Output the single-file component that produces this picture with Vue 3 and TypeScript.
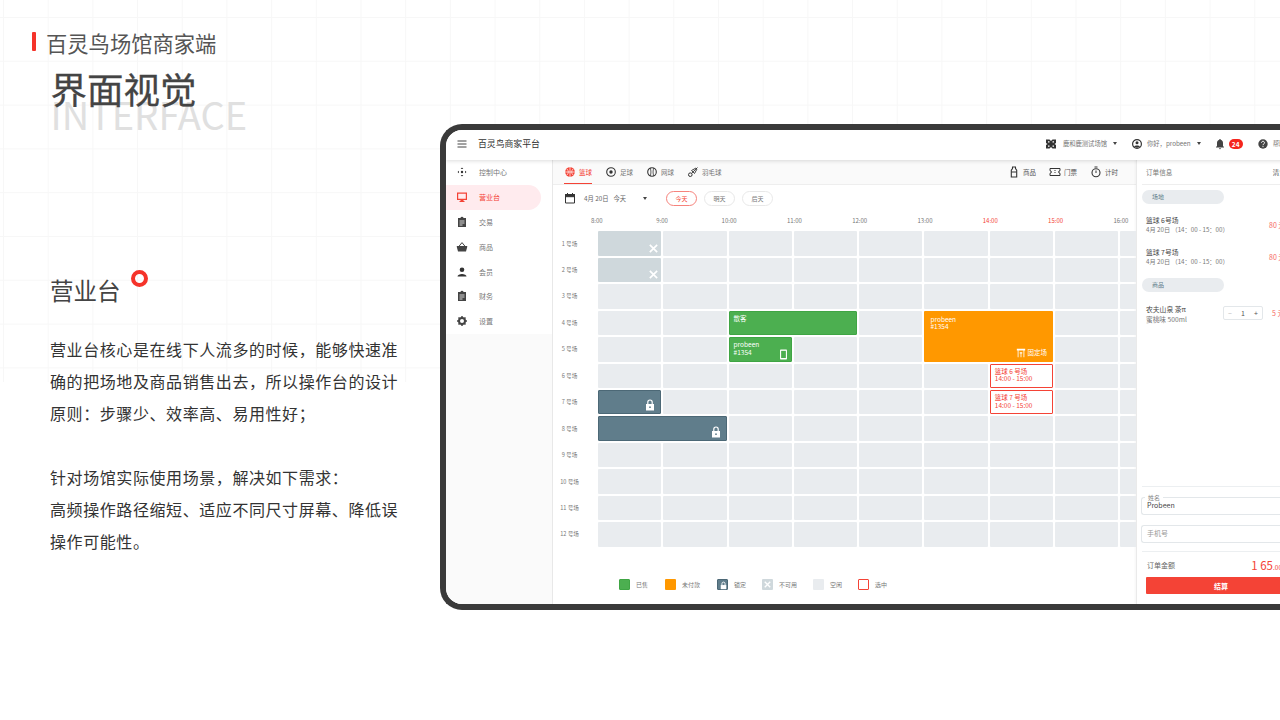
<script setup lang="ts">
type Cell = { col: number; row: number; span?: number; rows?: number; kind: string; l1?: string; l2?: string; icon?: string; tag?: string }

const nav = [
  { label: '控制中心', icon: 'move' },
  { label: '营业台', icon: 'monitor', active: true },
  { label: '交易', icon: 'clip' },
  { label: '商品', icon: 'basket' },
  { label: '会员', icon: 'person' },
  { label: '财务', icon: 'clip' },
  { label: '设置', icon: 'gear' },
]
const hours = ['8:00', '9:00', '10:00', '11:00', '12:00', '13:00', '14:00', '15:00', '16:00']
const courts = Array.from({ length: 12 }, (_, i) => `${i + 1} 号场`)
const taken: Cell[] = [
  { col: 1, row: 1, kind: 'off', icon: 'x' },
  { col: 1, row: 2, kind: 'off', icon: 'x' },
  { col: 3, row: 4, span: 2, kind: 'sold', l1: '散客' },
  { col: 3, row: 5, kind: 'sold', l1: 'probeen', l2: '#1354', icon: 'phone' },
  { col: 6, row: 4, span: 2, rows: 2, kind: 'unpaid', l1: 'probeen', l2: '#1354', tag: '固定场' },
  { col: 7, row: 6, kind: 'sel', l1: '篮球 6 号场', l2: '14:00 - 15:00' },
  { col: 7, row: 7, kind: 'sel', l1: '篮球 7 号场', l2: '14:00 - 15:00' },
  { col: 1, row: 7, kind: 'lock', icon: 'lock' },
  { col: 1, row: 8, span: 2, kind: 'lock', icon: 'lock' },
]
const covered = (c: number, r: number) =>
  taken.some(t => c >= t.col && c < t.col + (t.span ?? 1) && r >= t.row && r < t.row + (t.rows ?? 1))
const free: { col: number; row: number }[] = []
for (let r = 1; r <= 12; r++) for (let c = 1; c <= 9; c++) if (!covered(c, r)) free.push({ col: c, row: r })
const place = (t: { col: number; row: number; span?: number; rows?: number }) => ({
  gridColumn: `${t.col} / span ${t.span ?? 1}`,
  gridRow: `${t.row} / span ${t.rows ?? 1}`,
})
const legend = [
  { k: 'sold', t: '已售' },
  { k: 'unpaid', t: '未付款' },
  { k: 'lock', t: '锁定' },
  { k: 'off', t: '不可用' },
  { k: 'idle', t: '空闲' },
  { k: 'sel', t: '选中' },
]
</script>

<template>
  <div class="page">
    <section class="intro">
      <div class="brand"><i class="brand-bar"></i><span>百灵鸟场馆商家端</span></div>
      <div class="heading">
        <span class="en">INTERFACE</span>
        <h1>界面视觉</h1>
      </div>
      <div class="copy">
        <h2>营业台<i class="ring"></i></h2>
        <p>营业台核心是在线下人流多的时候，能够快速准<br />确的把场地及商品销售出去，所以操作台的设计<br />原则：步骤少、效率高、易用性好；</p>
        <p class="p2">针对场馆实际使用场景，解决如下需求：<br />高频操作路径缩短、适应不同尺寸屏幕、降低误<br />操作可能性。</p>
      </div>
    </section>

    <section class="device">
      <div class="screen">
        <header class="top">
          <svg class="ic12 burger" viewBox="0 0 12 12"><path d="M1.500 3h9M1.500 6h9M1.500 9h9" stroke="#444" stroke-width="1" fill="none" /></svg>
          <b class="app">百灵鸟商家平台</b>
          <div class="top-r">
            <span class="ti ven">
              <svg class="ic12" viewBox="0 0 12 12"><path d="M1 1.500h3.500L6 3l1.500-1.500H11V5L9.500 6 11 7v3.500H7.500L6 9l-1.500 1.500H1V7l1.500-1L1 5z" fill="#333" /><path d="M3 3.300h1.500v1.200H3zM7.500 3.300H9v1.200H7.500zM3 7.500h1.500v1.200H3zM7.500 7.500H9v1.200H7.500z" fill="#fff" /></svg>
              <em class="ven-t">鹿和鹿测试场馆</em><i class="caret"></i>
            </span>
            <span class="ti usr">
              <svg class="ic12" viewBox="0 0 12 12"><circle cx="6" cy="6" r="4.400" fill="none" stroke="#333" stroke-width="1.200" /><circle cx="6" cy="4.800" r="1.500" fill="#333" /><path d="M3 8.600c1-1.400 5-1.400 6 0-1.600 1.400-4.400 1.400-6 0z" fill="#333" /></svg>
              <em class="usr-t">你好，probeen</em><i class="caret"></i>
            </span>
            <span class="ti bell">
              <svg class="ic12" viewBox="0 0 12 12"><path d="M6 1c-.5 0-.8.300-.8.800C3.800 2.200 3 3.400 3 5v3L2 9v.5h8V9L9 8V5c0-1.600-.8-2.800-2.200-3.200C6.800 1.300 6.500 1 6 1zM5 10.200a1 1 0 0 0 2 0z" fill="#444" /></svg>
              <em class="badge">24</em>
            </span>
            <span class="ti help">
              <svg class="ic12" viewBox="0 0 12 12"><circle cx="6" cy="6" r="4.700" fill="#444" /><path d="M4.500 4.800c0-2 3-2 3 0 0 1.200-1.500 1-1.500 2.400" stroke="#fff" stroke-width="1" fill="none" /><circle cx="6" cy="8.600" r=".6" fill="#fff" /></svg>
              <em>帮助</em>
            </span>
          </div>
        </header>

        <div class="body">
          <aside class="side">
            <ul>
              <li v-for="n in nav" :key="n.label" :class="{ on: n.active }">
                <svg class="ic12" viewBox="0 0 12 12">
                  <template v-if="n.icon === 'move'"><path d="M6 1.500 7.300 3H4.700zM6 10.500 4.700 9h2.600zM1.500 6 3 4.700v2.600zM10.500 6 9 7.300V4.700z" fill="#333" /><circle cx="6" cy="6" r="1.200" fill="#333" /></template>
                  <template v-else-if="n.icon === 'monitor'"><path d="M1 1.500h10v7.500H7.500v1h1v1h-5v-1h1V9H1z" fill="#f44336" /><path d="M2.200 2.700h7.600v5.100H2.200z" fill="#ffebee" /></template>
                  <template v-else-if="n.icon === 'clip'"><path d="M2 2h2.400a1.700 1.700 0 0 1 3.200 0H10v9H2z" fill="#444" /><path d="M3.500 5h5M3.500 7h5M3.500 9h3" stroke="#fff" stroke-width=".8" /></template>
                  <template v-else-if="n.icon === 'basket'"><path d="M.8 5h10.400v1L10 10.500H2L.8 6z" fill="#444" /><path d="M3.200 5 6 1.600 8.800 5" stroke="#444" fill="none" /></template>
                  <template v-else-if="n.icon === 'person'"><circle cx="6" cy="3.700" r="2.300" fill="#333" /><path d="M1.500 10.500c0-3.400 9-3.400 9 0z" fill="#333" /></template>
                  <template v-else><circle cx="6" cy="6" r="3" fill="none" stroke="#444" stroke-width="2" /><path d="M6 1v2M6 9v2M1 6h2M9 6h2M2.500 2.500l1.500 1.500M8 8l1.500 1.500M2.500 9.500 4 8M8 4l1.500-1.500" stroke="#444" stroke-width="1.500" /></template>
                </svg>
                <span>{{ n.label }}</span>
              </li>
            </ul>
          </aside>

          <main class="main">
            <nav class="tabs">
              <span class="tab on">
                <svg class="ic12" viewBox="0 0 12 12"><circle cx="6" cy="6" r="4.800" fill="#f44336" /><path d="M1.200 6h9.600M6 1.200v9.600M2.800 2.800c2 2 2 4.400 0 6.400M9.200 2.800c-2 2-2 4.400 0 6.400" stroke="#fff" stroke-width=".7" fill="none" /></svg>
                篮球
              </span>
              <span class="tab">
                <svg class="ic12" viewBox="0 0 12 12"><circle cx="6" cy="6" r="4.300" fill="none" stroke="#333" stroke-width="1.100" /><circle cx="6" cy="6" r="1.700" fill="#333" /></svg>
                足球
              </span>
              <span class="tab">
                <svg class="ic12" viewBox="0 0 12 12"><circle cx="6" cy="6" r="4.300" fill="none" stroke="#333" stroke-width="1.100" /><path d="M4.200 2c1 2.400 1 5.600 0 8M7.800 2c-1 2.400-1 5.600 0 8" stroke="#333" stroke-width=".8" fill="none" /></svg>
                网球
              </span>
              <span class="tab">
                <svg class="ic12" viewBox="0 0 12 12"><circle cx="3.300" cy="8.700" r="1.800" fill="none" stroke="#333" /><path d="M4.600 7.300 10.500 1.500M4.500 4.500 9 2l1 1-2.500 4.500z" stroke="#333" stroke-width=".9" fill="none" /></svg>
                羽毛球
              </span>
              <span class="tab-r">
                <span class="tr">
                  <svg class="ic12" viewBox="0 0 12 12"><path d="M4.500 1h3v1.600l1.200 1.600v6.800H3.300V4.200l1.200-1.600z" fill="none" stroke="#333" stroke-width="1.100" /><path d="M3.500 6h5" stroke="#333" /></svg>
                  商品
                </span>
                <span class="tr">
                  <svg class="ic12" viewBox="0 0 12 12"><path d="M1 2.500h10v2.200a1.300 1.300 0 0 0 0 2.600v2.200H1V7.300a1.300 1.300 0 0 0 0-2.600z" fill="none" stroke="#333" stroke-width="1" /><path d="M6 4v4" stroke="#333" stroke-dasharray="1 1" /></svg>
                  门票
                </span>
                <span class="tr">
                  <svg class="ic12" viewBox="0 0 12 12"><circle cx="6" cy="6.800" r="4" fill="none" stroke="#333" stroke-width="1.100" /><path d="M4.500 1h3M6 4.500v2.500" stroke="#333" stroke-width="1" /></svg>
                  计时
                </span>
              </span>
            </nav>

            <div class="dates">
              <svg class="ic12" viewBox="0 0 12 12"><path d="M1.500 2.500h9v8.500h-9z" fill="none" stroke="#333" stroke-width="1" /><path d="M1.500 2.500h9v2.200h-9zM3.500 1v2M8.500 1v2" fill="#333" stroke="#333" /></svg>
              <span class="d-txt">4月 20日</span><span class="d-txt d2">今天</span><i class="caret c2"></i>
              <span class="pill on">今天</span><span class="pill">明天</span><span class="pill">后天</span>
            </div>

            <div class="hours">
              <span v-for="(h, i) in hours" :key="h" :class="{ hot: i === 6 || i === 7 }">{{ h }}</span>
            </div>

            <div class="sheet">
              <div class="courts"><span v-for="c in courts" :key="c">{{ c }}</span></div>
              <div class="grid">
                <i v-for="f in free" :key="`${f.col}-${f.row}`" class="cell" :style="place(f)"></i>
                <div v-for="t in taken" :key="`t${t.col}-${t.row}`" class="cell" :class="t.kind" :style="place(t)">
                  <span v-if="t.l1" class="l1">{{ t.l1 }}</span>
                  <span v-if="t.l2" class="l2">{{ t.l2 }}</span>
                  <svg v-if="t.icon === 'x'" class="mark" viewBox="0 0 12 12"><path d="M2 2l8 8M10 2l-8 8" stroke="#fff" stroke-width="1.800" /></svg>
                  <svg v-if="t.icon === 'lock'" class="mark" viewBox="0 0 12 12"><path d="M2 5h8v6.500H2z" fill="#fff" /><path d="M3.800 5V3.200a2.200 2.200 0 0 1 4.400 0V5" fill="none" stroke="#fff" stroke-width="1.200" /><circle cx="6" cy="8.200" r=".9" fill="#607d8b" /></svg>
                  <svg v-if="t.icon === 'phone'" class="mark" viewBox="0 0 12 12"><path d="M3 .5h6a.8.800 0 0 1 .8.800v9.400a.8.800 0 0 1-.8.800H3a.8.800 0 0 1-.8-.8V1.300A.8.800 0 0 1 3 .5z" fill="#fff" /><path d="M3.400 2h5.200v7.800H3.400z" fill="#4caf50" /></svg>
                  <span v-if="t.tag" class="tag">
                    <svg class="ic10" viewBox="0 0 12 12"><path d="M1 1h10v2H1zM2 3h1v8H2zM9 3h1v8H9zM4.500 5h3v1.500h-3zM5.500 6.500h1V11h-1z" fill="#fff" /></svg>{{ t.tag }}
                  </span>
                </div>
              </div>
            </div>

            <footer class="legend">
              <span v-for="l in legend" :key="l.k" class="lg" :class="`lg-${l.k}`">
                <i class="sw" :class="l.k">
                  <svg v-if="l.k === 'lock'" viewBox="0 0 12 12"><path d="M3 5.500h6V10H3z" fill="#fff" /><path d="M4.300 5.500V4a1.700 1.700 0 0 1 3.400 0v1.500" fill="none" stroke="#fff" /></svg>
                  <svg v-if="l.k === 'off'" viewBox="0 0 12 12"><path d="M3 3l6 6M9 3 3 9" stroke="#fff" stroke-width="1.500" /></svg>
                </i>
                {{ l.t }}
              </span>
            </footer>
          </main>

          <aside class="order">
            <div class="o-head"><span>订单信息</span><span class="clear">清空</span></div>
            <div class="o-tag">场地</div>
            <div class="o-row r1">
              <div><b>篮球 6号场</b><small>4月 20日 （14：00 - 15：00）</small></div><em>80 元</em>
            </div>
            <div class="o-row r2">
              <div><b>篮球 7号场</b><small>4月 20日 （14：00 - 15：00）</small></div><em>80 元</em>
            </div>
            <div class="o-tag t2">商品</div>
            <div class="o-row r3">
              <div><b>农夫山泉 茶π</b><small>蜜桃味 500ml</small></div>
              <span class="stepper"><i class="minus">−</i><i>1</i><i>+</i></span>
              <em>5 元</em>
            </div>
            <div class="spacer"></div>
            <div class="field name"><label>姓名</label>Probeen</div>
            <div class="field phone">手机号</div>
            <div class="sum"><span>订单金额</span><strong>1 65<small>.00 元</small></strong></div>
            <button class="pay">结算</button>
          </aside>
        </div>
      </div>
    </section>
  </div>
</template>

<style>
html, body { margin: 0; background: #fff; }
</style>

<style scoped>
* { box-sizing: border-box; }
i, em { font-style: normal; }
.page {
  position: relative; width: 1280px; height: 720px; overflow: hidden; display: flex;
  font-family: "Noto Sans CJK SC", "Noto Sans", sans-serif; color: #333;
  background-color: #fff;
}
.page::before {
  content: ""; position: absolute; left: 0; top: 0; width: 1280px; height: 382px;
  background-image: linear-gradient(#f7f7f7 1px, transparent 1px), linear-gradient(90deg, #f7f7f7 1px, transparent 1px);
  background-size: 44.700px 43.800px; background-position: 3px 17px;
}
.intro { position: relative; width: 440px; flex: none; padding: 28px 0 0 32px; }
.brand { display: flex; align-items: center; gap: 10px; height: 28px; font-size: 21.300px; color: #555; }
.brand-bar { width: 4px; height: 19px; background: #f5332a; border-radius: 1px; margin-top: -2px; }
.heading { position: relative; margin: 3px 0 0 18.500px; height: 65px; }
.heading h1 { position: relative; margin: 0; font-size: 36.500px; font-weight: 400; line-height: 60px; color: #444; -webkit-text-stroke: .3px #444; }
.en { position: absolute; left: 0; top: 31px; font-size: 38px; line-height: 48px; font-weight: 400; color: #e0e0e0; white-space: nowrap; }
.copy { margin: 0 0 0 18px; padding-top: 149px; width: 380px; }
.copy h2 { position: relative; margin: 0; font-size: 23.500px; font-weight: 400; line-height: 34px; color: #444; }
.ring { position: absolute; left: 81px; top: -3px; width: 17px; height: 17px; border: 4px solid #f5332a; border-radius: 50%; }
.copy p { margin: 26px 0 0; font-size: 16px; letter-spacing: .58px; line-height: 32px; color: #333; white-space: nowrap; }
.copy .p2 { margin-top: 32px; }

.device { position: relative; flex: none; width: 900px; height: 486px; margin-top: 124px; }
.screen { width: 100%; height: 100%; background: #fff; border: 6px solid #3a3a3a; border-right: 0; border-radius: 22px 0 0 22px; overflow: hidden; display: flex; flex-direction: column; font-size: 7px; color: #555; }
.top { flex: none; height: 30px; display: flex; align-items: center; padding: 0 0 3px 10px; background: #fff; box-shadow: 0 1px 4px rgba(0,0,0,.14); position: relative; z-index: 2; }
.app { font-weight: 400; font-size: 8.860px; color: #333; margin-left: 10px; white-space: nowrap; }
.top-r { position: relative; flex: 1; height: 100%; display: flex; align-items: center; padding-left: 505px; font-size: 6.300px; }
.ti { display: inline-flex; align-items: center; white-space: nowrap; }
.ti em { margin-left: 4px; color: #777; }
.ti .ven-t { margin-left: 6px; }
.ic12 { width: 12px; height: 12px; flex: none; }
.ic10 { width: 10px; height: 10px; flex: none; }
.caret { width: 0; height: 0; border: 2.500px solid transparent; border-top: 3px solid #444; border-bottom: 0; margin-left: 6px; }
.usr { margin-left: 14px; }
.bell { margin-left: 13px; }
.ti .badge { margin-left: 3px; width: 14px; height: 10px; line-height: 10px; border-radius: 5px; background: #f5251d; color: #fff; text-align: center; font-size: 6.500px; font-weight: 700; }
.help { margin-left: 14px; }

.body { flex: 1; display: flex; min-height: 0; }
.side { flex: none; width: 107px; background: #fafafa; border-right: 1px solid #e8e8e8; }
.side ul { margin: 0; padding: 0; list-style: none; background: #fff; }
.side li { height: 24.800px; display: flex; align-items: center; padding-left: 10px; gap: 11px; font-size: 7px; color: #777; }
.side li.on { width: 95px; background: #ffebee; border-radius: 0 12.500px 12.500px 0; color: #f44336; }

.main { flex: none; width: 583px; display: flex; flex-direction: column; min-width: 0; overflow: hidden; }
.tabs { flex: none; height: 25px; display: flex; align-items: stretch; background: #fafafa; border-bottom: 1px solid #eee; padding-left: 11px; gap: 13px; font-size: 6.500px; }
.tab { display: inline-flex; align-items: center; gap: 3px; color: #777; white-space: nowrap; }
.tab.on { color: #f44336; border-bottom: 1.500px solid #f44336; }
.tab-r { margin-left: auto; display: flex; align-items: center; gap: 13px; padding-right: 18px; }
.tr { display: inline-flex; align-items: center; gap: 3px; }
.dates { flex: none; height: 26px; display: flex; align-items: center; padding-left: 11px; font-size: 6.300px; color: #666; }
.d-txt { margin-left: 8px; white-space: nowrap; }
.d2 { margin-left: 5px; }
.c2 { margin-left: 17px; }
.pill { width: 31px; height: 15px; line-height: 13px; text-align: center; border: 1px solid #e8e8e8; border-radius: 8px; margin-left: 7px; font-size: 6px; color: #777; }
.dates .c2 + .pill { margin-left: 19px; }
.pill.on { border-color: #f6837c; color: #f44336; }
.hours { flex: none; height: 20.400px; padding: 0 0 2px 38px; display: flex; align-items: center; font-size: 6px; color: #777; }
.hours span { width: 65.300px; flex: none; }
.hours .hot { color: #f44336; }
.sheet { flex: none; display: flex; }
.courts { width: 45px; flex: none; display: grid; grid-auto-rows: 24.450px; row-gap: 2px; font-size: 5.600px; color: #777; padding-right: 12px; }
.courts span { display: flex; align-items: center; justify-content: center; white-space: nowrap; }
.grid { display: grid; grid-template-columns: repeat(9, 63.300px); grid-auto-rows: 24.450px; gap: 2px; }
.cell { position: relative; display: block; background: #e9ecef; border-radius: 1px; font-size: 6.500px; line-height: 7.500px; color: #fff; padding: 3px 0 0 5px; }
.l1, .l2 { display: block; white-space: nowrap; }
.mark { position: absolute; right: 2px; bottom: 2px; width: 11px; height: 11px; }
.tag { position: absolute; right: 6px; bottom: 4px; display: inline-flex; align-items: center; gap: 2px; font-size: 6.500px; }
.off { background: #cfd8dc; }
.sold { background: #4caf50; border: 1px solid #3fa544; padding: 3px 0 0 4px; }
.sold .mark { bottom: 1px; }
.lock { background: #607d8b; border: 1px solid #4c6876; }
.lock .mark { right: 4px; bottom: 2px; width: 12px; height: 12px; }
.unpaid { background: #ff9800; padding: 5px 0 0 6px; }
.sel { background: #fff; border: 1px solid #f44336; color: #f44336; padding: 3px 0 0 4px; }
.idle { background: #e9ecef; }

.legend { flex: none; display: flex; align-items: center; padding: 32px 0 0 66px; font-size: 6px; color: #777; }
.lg { display: inline-flex; align-items: center; gap: 6px; width: 46px; white-space: nowrap; }
.lg-unpaid { width: 52px; }
.lg-lock { width: 45px; }
.lg-off { width: 51px; }
.lg-idle { width: 45px; }
.sw { width: 11px; height: 11px; border-radius: 1px; display: block; padding: 0; flex: none; }
.sw svg { width: 11px; height: 11px; display: block; }

.order { flex: none; width: 160px; background: #fff; border-left: 1px solid #eaeaea; display: flex; flex-direction: column; padding-left: 5px; box-shadow: -1px 0 2px rgba(0,0,0,.04); white-space: nowrap; }
.o-head { flex: none; height: 25px; display: flex; align-items: center; justify-content: space-between; padding: 0 10px 0 4px; border-bottom: 1px solid #eee; font-size: 6.600px; color: #777; }
.clear { color: #555; }
.o-tag { width: 82px; height: 14px; line-height: 14px; margin-top: 5px; border-radius: 7px; background: #e9ecef; font-size: 6px; color: #607d8b; padding-left: 10px; flex: none; }
.t2 { margin-top: 5px; }
.o-row { display: flex; align-items: center; padding-left: 4px; flex: none; height: 32px; position: relative; }
.o-row b { display: block; font-weight: 400; font-size: 6.800px; line-height: 10px; color: #444; }
.o-row small { display: block; font-size: 6.200px; line-height: 10px; color: #777; }
.o-row em { position: absolute; left: 127px; top: 11px; font-size: 7px; color: #f6665e; }
.r1 { margin-top: 5px; }
.r3 { margin-top: 4px; height: 36px; }
.r3 small { font-size: 6.700px; }
.r3 em { top: 12px; left: 130px; }
.stepper { position: absolute; left: 81px; top: 10px; width: 40px; height: 14px; border: 1px solid #e3e7ea; border-radius: 2px; display: flex; justify-content: space-between; align-items: center; padding: 0 4px; font-size: 7px; color: #555; }
.minus { color: #bbb; }
.spacer { flex: 1; border-bottom: 1px solid #eceff1; }
.field { position: relative; flex: none; height: 17.500px; margin: 10px 0 0 -1px; border: 1px solid #e3e7ea; border-right: 0; border-radius: 3px 0 0 3px; padding-left: 5px; line-height: 15.500px; font-size: 7px; color: #444; }
.field label { position: absolute; left: 3px; top: -4px; padding: 0 3px; background: #fff; font-size: 6px; line-height: 7px; color: #888; }
.phone { margin-top: 10.500px; color: #999; }
.sum { flex: none; height: 26px; margin-top: 8.500px; padding: 0 0 0 5px; border-top: 1px solid #eceff1; display: flex; align-items: center; justify-content: space-between; font-size: 7px; color: #666; }
.sum strong { font-weight: 400; font-size: 11.500px; color: #f44336; margin-right: 6px; }
.sum small { font-size: 6.500px; }
.pay { flex: none; width: 150px; height: 17px; margin: 0 0 10px 4px; border: 0; border-radius: 1px; background: #f44336; color: #fff; font: 700 7px "Noto Sans CJK SC", sans-serif; text-align: center; }
</style>
